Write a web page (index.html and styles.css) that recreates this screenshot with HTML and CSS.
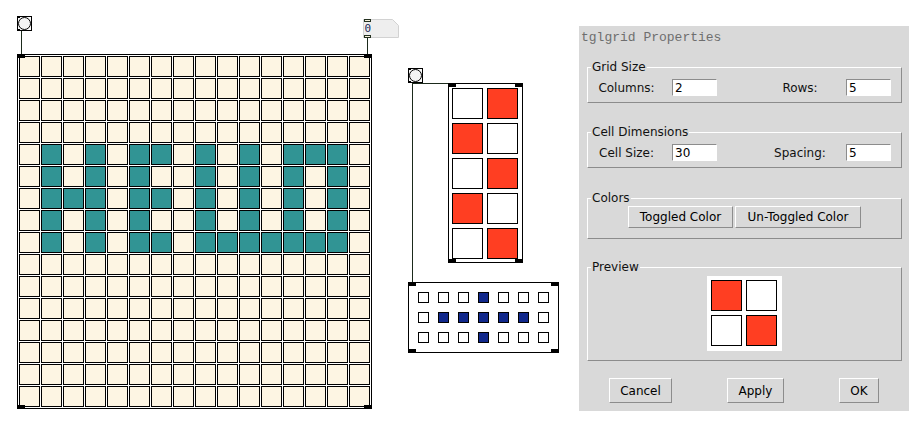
FILE: index.html
```html
<!DOCTYPE html>
<html lang="en">
<head>
    <meta charset="UTF-8">
    <title>tglgrid patch</title>
    <link rel="stylesheet" href="styles.css">
</head>
<body>
    <div class="patch">
        <svg class="wires" width="580" height="441" viewBox="0 0 580 441">
            <line x1="21.5" y1="31" x2="21.5" y2="54" />
            <line x1="367.5" y1="37" x2="367.5" y2="54" />
            <line x1="412.5" y1="83" x2="412.5" y2="282" />
            <line x1="412" y1="83.5" x2="448" y2="83.5" />
        </svg>

        <svg class="obj bang bang-1" width="15" height="15" viewBox="0 0 15 15">
            <rect x="0.5" y="0.5" width="14" height="14" fill="#fbfbfb" stroke="#000" />
            <circle cx="7.5" cy="7.5" r="6" fill="#f4f4f4" stroke="#000" />
            <rect x="0" y="0" width="3" height="2" fill="#000" />
            <rect x="0" y="13" width="3" height="2" fill="#000" />
        </svg>

        <svg class="obj numbox" width="36" height="19" viewBox="0 0 36 19">
            <polygon points="0.5,0.5 29.5,0.5 35.5,6.5 35.5,18.5 0.5,18.5" fill="#eeeeee" stroke="#d2d2d2" />
            <rect x="1.5" y="0.5" width="6" height="2" fill="#f6f0dc" stroke="#23301f" />
            <rect x="1.5" y="16.5" width="6" height="2" fill="#f6f0dc" stroke="#23301f" />
            <text x="1.5" y="13" class="numbox-text">0</text>
        </svg>

        <div class="tgl tgl-big" data-rows="0000000000000000 0000000000000000 0000000000000000 0000000000000000 0101011010101110 0101010010101010 0111011010101010 0101010010101010 0101011011111110 0000000000000000 0000000000000000 0000000000000000 0000000000000000 0000000000000000 0000000000000000 0000000000000000">
            <span class="port tl"></span><span class="port tr"></span>
            <span class="port bl"></span><span class="port br"></span>
        </div>

        <svg class="obj bang bang-2" width="15" height="15" viewBox="0 0 15 15">
            <rect x="0.5" y="0.5" width="14" height="14" fill="#fbfbfb" stroke="#000" />
            <circle cx="7.5" cy="7.5" r="6" fill="#f4f4f4" stroke="#000" />
            <rect x="0" y="0" width="3" height="2" fill="#000" />
            <rect x="0" y="13" width="3" height="2" fill="#000" />
        </svg>

        <div class="tgl tgl-red" data-rows="01 10 01 10 01">
            <span class="port tl"></span><span class="port tr"></span>
            <span class="port bl"></span><span class="port br"></span>
        </div>

        <div class="tgl tgl-blue" data-rows="0001000 0111110 0001000">
            <span class="port tl"></span><span class="port tr"></span>
            <span class="port bl"></span><span class="port br"></span>
        </div>

        <div class="dialog">
            <div class="dialog-title">tglgrid Properties</div>

            <fieldset class="group">
                <legend>Grid Size</legend>
                <div class="field-row">
                    <label>Columns:</label>
                    <input class="entry" type="text" value="2">
                    <label>Rows:</label>
                    <input class="entry" type="text" value="5">
                </div>
            </fieldset>

            <fieldset class="group group-cells">
                <legend>Cell Dimensions</legend>
                <div class="field-row">
                    <label>Cell Size:</label>
                    <input class="entry" type="text" value="30">
                    <label>Spacing:</label>
                    <input class="entry" type="text" value="5">
                </div>
            </fieldset>

            <fieldset class="group group-colors">
                <legend>Colors</legend>
                <div class="color-buttons">
                    <button class="btn btn-toggled">Toggled Color</button>
                    <button class="btn btn-untoggled">Un-Toggled Color</button>
                </div>
            </fieldset>

            <fieldset class="group group-preview">
                <legend>Preview</legend>
                <div class="tgl tgl-preview" data-rows="10 01"></div>
            </fieldset>

            <div class="dialog-buttons">
                <button class="btn btn-cancel">Cancel</button>
                <button class="btn btn-apply">Apply</button>
                <button class="btn btn-ok">OK</button>
            </div>
        </div>
    </div>

    <script>
        // construir las celdas de cada tglgrid a partir de su patrón
        document.querySelectorAll('.tgl').forEach(grid => {
            grid.dataset.rows.split(' ').forEach(row => {
                [...row].forEach(bit => {
                    const cell = document.createElement('span');
                    cell.className = bit === '1' ? 'cell on' : 'cell';
                    grid.appendChild(cell);
                });
            });
        });
    </script>
</body>
</html>
```

FILE: styles.css
```css
:root {
    --cream: #fdf5e3;
    --teal: #319494;
    --red: #ff3e22;
    --navy: #11288c;
    --wire: #1b2a1b;
    --panel: #d9d9d9;
    --shadow: #8c8c8c;
}

* {
    margin: 0;
    padding: 0;
    box-sizing: border-box;
}

body {
    background: #fff;
    font-family: 'DejaVu Sans', sans-serif;
    font-size: 12px;
    color: #111;
    overflow: hidden;
}

.patch {
    position: relative;
    width: 920px;
    height: 441px;
}

.wires {
    position: absolute;
    left: 0;
    top: 0;
}

.wires line {
    stroke: var(--wire);
    stroke-width: 1;
}

.obj {
    position: absolute;
}

.bang-1 {
    left: 17px;
    top: 16px;
}

.bang-2 {
    left: 408px;
    top: 68px;
}

.numbox {
    left: 363px;
    top: 19px;
}

.numbox-text {
    font-family: 'DejaVu Sans Mono', monospace;
    font-size: 11px;
    fill: #1f2a55;
}

/* tglgrid */
.tgl {
    display: grid;
    border: 1px solid #000;
    background: #fff;
}

.tgl .cell {
    border: 1px solid #000;
    background: #fff;
}

.tgl .cell.on {
    background: var(--red);
}

.tgl-big,
.tgl-red,
.tgl-blue {
    position: absolute;
}

.tgl-big {
    left: 17px;
    top: 54px;
    padding: 1px;
    gap: 1px;
    grid-template-columns: repeat(16, 21px);
    grid-auto-rows: 21px;
}

.tgl-big .cell {
    background: var(--cream);
}

.tgl-big .cell.on {
    background: var(--teal);
}

.tgl-red {
    left: 448px;
    top: 83px;
    padding: 4px 4px 3px 3px;
    gap: 4px;
    grid-template-columns: repeat(2, 31px);
    grid-auto-rows: 31px;
}

.tgl-blue {
    left: 408px;
    top: 282px;
    padding: 9px;
    gap: 9px;
    grid-template-columns: repeat(7, 11px);
    grid-auto-rows: 11px;
}

.tgl-blue .cell.on {
    background: var(--navy);
}

.port {
    position: absolute;
    width: 8px;
    height: 4px;
    background: #000;
}

.port.tl { top: -1px; left: -1px; }
.port.tr { top: -1px; right: -1px; }
.port.bl { bottom: -1px; left: -1px; }
.port.br { bottom: -1px; right: -1px; }

/* ventana de propiedades */
.dialog {
    position: absolute;
    left: 579px;
    top: 26px;
    width: 330px;
    height: 385px;
    background: var(--panel);
}

.dialog-title {
    height: 24px;
    padding: 4px 0 0 2px;
    font-family: 'Liberation Mono', monospace;
    font-size: 13px;
    line-height: 16px;
    color: #6e6e6e;
}

.group {
    margin: 10px 7px 0 8px;
    border: 1px solid var(--shadow);
    border-top-color: #fff;
    border-left-color: #fff;
}

.group legend {
    margin-left: 3px;
    padding: 0 1px;
    line-height: 14px;
}

.group-cells {
    margin-top: 22px;
}

.group-colors {
    margin-top: 23px;
}

.group-preview {
    margin-top: 21px;
}

.field-row {
    display: grid;
    grid-template-columns: 77px 89px 92px 45px;
    align-items: center;
    padding: 5px 0 6px;
}

.field-row label {
    text-align: center;
}

.entry {
    width: 45px;
    height: 17px;
    padding: 0 2px;
    border: 1px solid #fff;
    border-top-color: var(--shadow);
    border-left-color: var(--shadow);
    background: #fff;
    font-family: 'DejaVu Sans', sans-serif;
    font-size: 12px;
    color: #000;
    outline: none;
}

.field-row .entry:first-of-type {
    margin-left: 7px;
}

.btn {
    height: 22px;
    background: var(--panel);
    border: 1px solid var(--shadow);
    border-top-color: #fff;
    border-left-color: #fff;
    font-family: 'DejaVu Sans', sans-serif;
    font-size: 12px;
    color: #000;
}

.color-buttons {
    display: flex;
    justify-content: center;
    gap: 2px;
    padding: 1px 0 10px;
}

.btn-toggled {
    width: 105px;
}

.btn-untoggled {
    width: 126px;
}

.group-preview {
    display: block;
}

.tgl-preview {
    width: 75px;
    margin: 2px auto 9px;
    border: none;
    padding: 4px 5px 5px 4px;
    gap: 4px;
    grid-template-columns: repeat(2, 31px);
    grid-auto-rows: 31px;
}

.dialog-buttons {
    display: flex;
    justify-content: space-between;
    margin-top: 17px;
    padding: 0 30px;
}

.dialog-buttons .btn {
    height: 25px;
}

.btn-cancel { width: 63px; }
.btn-apply { width: 57px; }
.btn-ok { width: 40px; }
```
